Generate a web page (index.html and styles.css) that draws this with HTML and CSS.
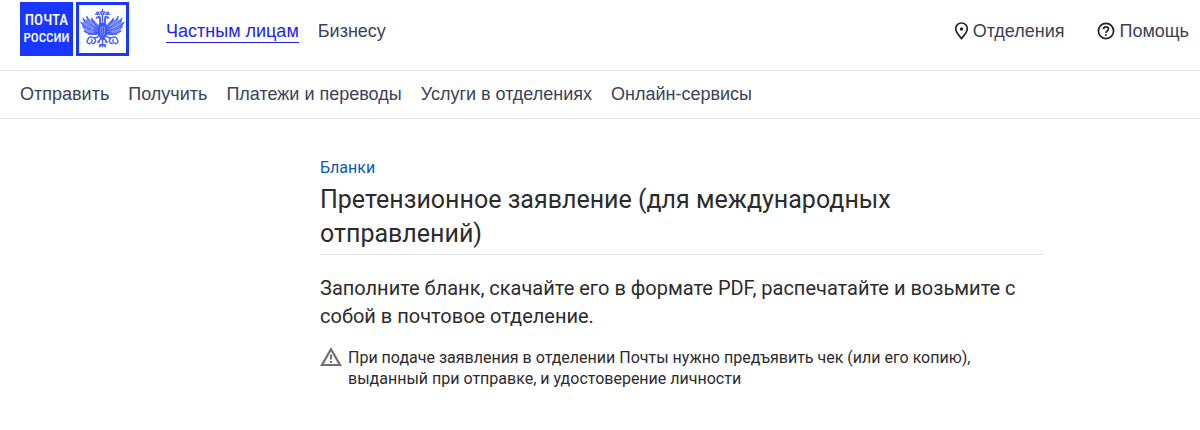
FILE: index.html
```html
<!DOCTYPE html>
<html lang="ru">
<head>
<meta charset="utf-8">
<meta name="viewport" content="width=device-width, initial-scale=1">
<title>Претензионное заявление</title>
<link rel="stylesheet" href="styles.css">
</head>
<body>
<header>
  <div class="topbar">
    <a class="logo" href="#">
      <span class="logo-name"><span class="logo-first">ПОЧТА</span><span class="logo-second">РОССИИ</span></span>
      <span class="logo-emblem">
        <svg viewBox="0 0 48 48" aria-hidden="true">
          <g id="half">
            <path fill="#6f84ff" d="M21 22C19 19 17 16 13 13L12 15L8 11L8 15L4 13L5 17L2 17L4 21L3 22L6 25L5 27L9 28L9 30L14 30L19 30Z"/>
            <path fill="none" stroke="#2a45ff" stroke-width="1" stroke-linecap="round" d="M20 24C15 22 9 18 8 11M20 26C13 25 6 20 4 13M19 28C12 27 5 23 2 17M18 29C13 30 9 29 5 26M20 22C17 20 14 17 13 13"/>
            <path fill="none" stroke="#fff" stroke-width=".5" d="M16 21C12 18 9 16 8 14M15 24C10 22 7 19 5 17M15 27C11 26 8 25 6 23"/>
            <path fill="none" stroke="#4a62ff" stroke-width="2" stroke-linecap="round" stroke-linejoin="round" d="M22 20C21 18 22 14 21 11.500L18 12.500"/>
            <path fill="none" stroke="#4a62ff" stroke-width="1.500" stroke-linecap="round" d="M20 31C19 33 17 33 15 33C11 31 9 33 9 35C7 37 9 39 11 39C13 38 14 36 13 35M16 34C18 36 17 38 14 39M22 34L19 38L21 37M17 9H21M18 7L19 8L20 7"/>
          </g>
          <use href="#half" transform="matrix(-1 0 0 1 48 0)"/>
          <path fill="none" stroke="#4a62ff" stroke-width="1.500" stroke-linecap="round" d="M24 4V6M22 6.500H26L25 9H23ZM24 10V16M21 42L24 39L27 42M21 40H27M24 33V42"/>
          <path fill="#3d56ff" d="M20 19Q24 15 28 19L29 28Q28 33 24 36Q20 33 19 28Z"/>
          <path fill="none" stroke="#a9b5ff" stroke-width=".6" d="M22 22H26V28Q26 30 24 31Q22 30 22 28ZM24 23V29M20 31L22 33M28 31L26 33"/>
        </svg>
      </span>
    </a>
    <nav class="audience" aria-label="Разделы">
      <a class="current" href="#" aria-current="page">Частным лицам</a>
      <a href="#">Бизнесу</a>
    </nav>
    <nav class="tools" aria-label="Сервис">
      <a href="#">
        <svg class="pin" viewBox="0 0 14 18" aria-hidden="true"><path d="M7 16.600C5 14 1.200 10.400 1.200 6.800A5.800 5.800 0 0 1 12.800 6.800C12.800 10.400 9 14 7 16.600Z" fill="none" stroke="#222" stroke-width="1.700"/><circle cx="7" cy="7" r="1.700" fill="#222"/></svg>
        <span>Отделения</span>
      </a>
      <a href="#">
        <svg class="help" viewBox="0 0 18 18" aria-hidden="true"><g fill="none" stroke="#222" stroke-width="1.700"><circle cx="9" cy="9" r="7.600"/><path d="M6.500 7.300C6.500 5.700 7.500 4.900 9 4.900S11.500 5.800 11.500 7.100C11.500 8.800 9 9 9 11"/></g><circle cx="9" cy="13" r="1" fill="#222"/></svg>
        <span>Помощь</span>
      </a>
    </nav>
  </div>
  <nav class="menu" aria-label="Услуги">
    <a href="#">Отправить</a>
    <a href="#">Получить</a>
    <a href="#">Платежи и переводы</a>
    <a href="#">Услуги в отделениях</a>
    <a href="#">Онлайн-сервисы</a>
  </nav>
</header>
<main>
  <a class="crumb" href="#">Бланки</a>
  <h1>Претензионное заявление (для международных отправлений)</h1>
  <p class="lead">Заполните бланк, скачайте его в формате PDF, распечатайте и возьмите с собой в почтовое отделение.</p>
  <div class="notice">
    <svg viewBox="0 0 22 20" aria-hidden="true"><path d="M11 2.200L20 18H2Z" fill="none" stroke="#707070" stroke-width="2.200"/><path d="M11 7.500V12.500M11 14V16" stroke="#707070" stroke-width="2"/></svg>
    <p>При подаче заявления в отделении Почты нужно предъявить чек (или его копию), выданный при отправке, и удостоверение личности</p>
  </div>
</main>
</body>
</html>
```
FILE: styles.css
```css
* {
  box-sizing: border-box;
}

body {
  margin: 0;
  background: #fff;
  color: #2c2c2c;
  font-family: Roboto, "Liberation Sans", sans-serif;
}

a {
  color: inherit;
  text-decoration: none;
}

h1,
p {
  margin: 0;
  font-weight: 400;
}

header {
  color: #3b4256;
  font: 18px/24px "Liberation Sans", Arial, sans-serif;
}

.topbar {
  display: flex;
  align-items: flex-start;
  padding: 2px 11px 14px 20px;
  border-bottom: 1px solid #e6e6ea;
}

.logo {
  display: flex;
  gap: 3px;
  margin-right: 37px;
}

.logo-name,
.logo-emblem {
  width: 53px;
  height: 54px;
}

.logo-name {
  display: flex;
  flex-direction: column;
  align-items: center;
  justify-content: center;
  background: #1a37ff;
  color: #fff;
  font: 500 15px/17px "Roboto Condensed", "Liberation Sans Narrow", sans-serif;
}

.logo-second {
  font-size: 13px;
}

.logo-emblem {
  border: 3px solid #1a37ff;
}

.logo-emblem svg {
  display: block;
  width: 100%;
  height: 100%;
}

.audience,
.tools {
  display: flex;
  padding-top: 17px;
}

.audience {
  gap: 19px;
}

.audience .current {
  border-bottom: 1px solid #2424e8;
  color: #2424e8;
  line-height: 22px;
  padding-top: 1px;
}

.tools {
  gap: 33px;
  margin-left: auto;
}

.tools a {
  display: flex;
  align-items: center;
  gap: 4px;
}

.tools svg {
  height: 18px;
}

.pin {
  width: 15px;
}

.help {
  width: 18px;
}

.menu {
  display: flex;
  gap: 19px;
  padding: 11px 20px 12px;
  border-bottom: 1px solid #e8e8e8;
}

main {
  max-width: 1044px;
  padding: 39px 0 40px 320px;
}

.crumb {
  display: block;
  color: #0b5aa8;
  font-size: 16px;
  line-height: 20px;
}

h1 {
  padding: 5px 0 3px;
  border-bottom: 1px solid #e4e4e4;
  font-size: 25px;
  line-height: 34px;
}

.lead {
  padding-top: 19px;
  font-size: 20px;
  line-height: 28px;
}

.notice {
  display: flex;
  gap: 6px;
  padding-top: 17px;
  font-size: 16px;
  line-height: 21px;
}

.notice svg {
  flex: none;
  width: 22px;
  height: 20px;
}

.notice p {
  max-width: 640px;
}
```
